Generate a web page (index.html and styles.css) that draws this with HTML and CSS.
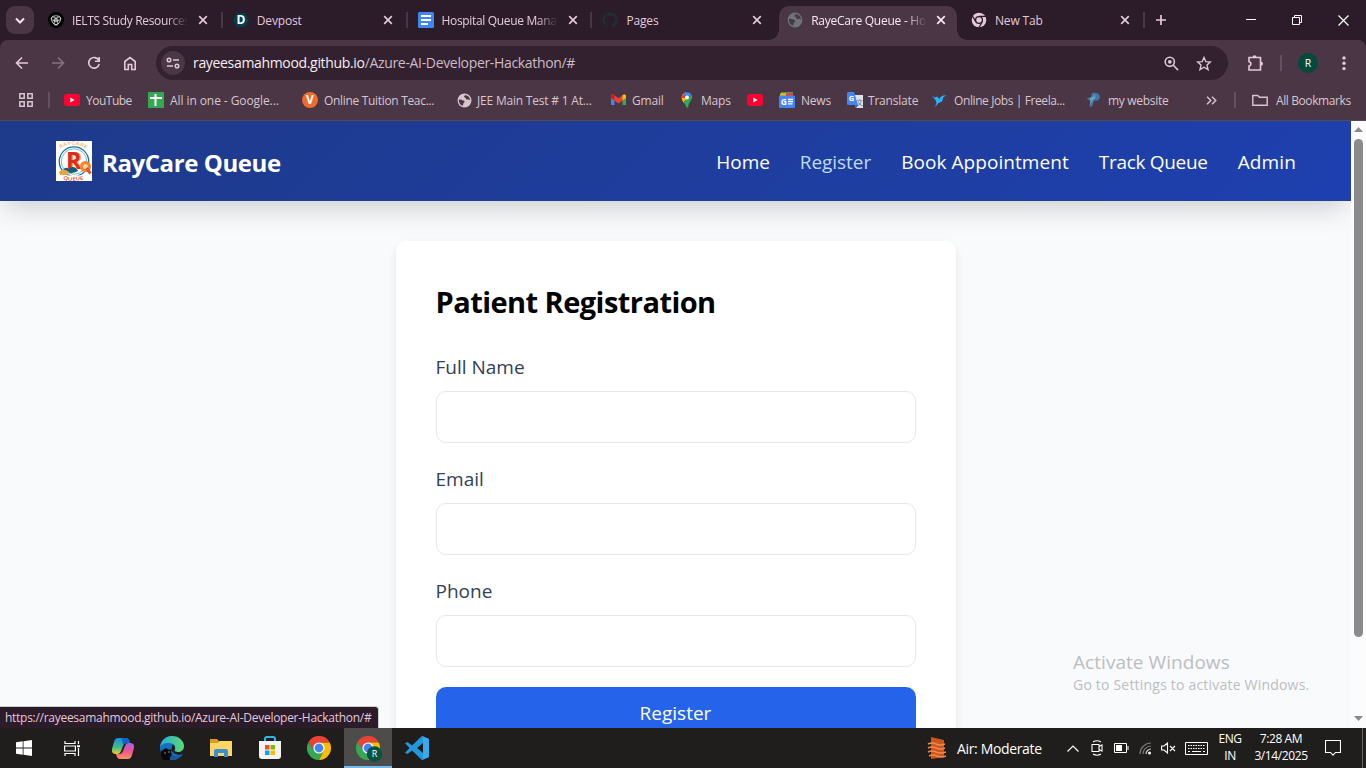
FILE: index.html
```html
<!DOCTYPE html>
<html lang="en">
  <head>
    <meta charset="utf-8">
    <title>RayeCare Queue - Hospital Queue Management</title>
    <link rel="stylesheet" href="styles.css">
  </head>
  <body>
    <svg class="defs" width="0" height="0">
      <defs>
        <symbol id="x" viewBox="0 0 10 10"><path d="M1.2 1.2l7.6 7.6M8.8 1.2L1.2 8.8" stroke="currentColor" stroke-width="1.7" fill="none"/></symbol>
        <symbol id="globe" viewBox="0 0 16 16">
          <circle cx="8" cy="8" r="7.4" fill="currentColor"/>
          <path class="globe-land" d="M2 7c1.600-.4 2.800 0 3.800.6 1.600.1 2.400.6 2.300 1.600-.1 1-1.300 1.200-1.400 2.300 0 .9-.5 2-1.200 2.200C3.200 12.600 1.600 10 2 7zM9 2c-.5.800-1.600 1-1.500 2 .2 1 1.500.5 1.800 1.500.2 1.300 1.200 1.800 2.300 1.400 1-.3 1.800.6 2.500.8-.1-2.900-2.300-5.200-5.100-5.700z"/>
        </symbol>
        <symbol id="youtube" viewBox="0 0 16 12"><rect width="16" height="12" rx="3" fill="#ff0033"/><path d="M6.300 3.500v5l4.200-2.500z" fill="#fff"/></symbol>
        <symbol id="chrome" viewBox="0 0 24 24">
          <path d="M12 6.500h10.700A12 12 0 0 0 1.600 6l5.600 8.700L12 12z" fill="#ea4335"/>
          <path d="M7.200 14.700L1.600 6A12 12 0 0 0 12 24l4.800-9.300L12 12z" fill="#34a853"/>
          <path d="M12 6.500h10.700A12 12 0 0 1 12 24l4.800-9.200z" fill="#fbbc04"/>
          <circle cx="12" cy="12" r="5.600" fill="#fff"/><circle cx="12" cy="12" r="4.400" fill="#4285f4"/>
        </symbol>
      </defs>
    </svg>

    <!-- Tab strip -->
    <div class="tabstrip">
      <button class="tab-search"><svg width="10" height="7" viewBox="0 0 10 7"><path d="M1 1.500l4 4 4-4" stroke="currentColor" stroke-width="2" fill="none"/></svg></button>
      <div class="tabs">
        <div class="tab">
          <svg class="favicon" viewBox="0 0 16 16"><circle cx="8" cy="8" r="8" fill="#000"/><g fill="none" stroke="#ddd" stroke-width=".8"><ellipse cx="8" cy="6.300" rx="4.500" ry="2.500"/><ellipse cx="8" cy="6.300" rx="4.500" ry="2.500" transform="rotate(120 8 8)"/><ellipse cx="8" cy="6.300" rx="4.500" ry="2.500" transform="rotate(240 8 8)"/><path d="M8 6l1.800 1v2L8 10 6.200 9V7z"/></g></svg>
          <span class="tab-title fade">IELTS Study Resources</span>
          <svg class="tab-close"><use href="#x"/></svg>
        </div>
        <div class="tab">
          <svg class="favicon" viewBox="0 0 16 16"><path d="M4 1h8l4 7-4 7H4L0 8z" fill="#003e54"/><text x="8" y="12.300" class="devpost-d">D</text></svg>
          <span class="tab-title">Devpost</span>
          <svg class="tab-close"><use href="#x"/></svg>
        </div>
        <div class="tab">
          <svg class="favicon" viewBox="0 0 16 16"><rect width="16" height="16" rx="1.500" fill="#4285f4"/><path d="M3 4h10M3 8h10M3 12h7" stroke="#fff" stroke-width="1.800"/></svg>
          <span class="tab-title fade">Hospital Queue Mana</span>
          <svg class="tab-close"><use href="#x"/></svg>
        </div>
        <div class="tab no-sep">
          <svg class="favicon" viewBox="0 0 16 16"><path d="M8 0a8 8 0 0 0-2.500 15.600c.4.1.5-.2.5-.4v-1.500c-2.200.5-2.700-.9-2.700-.9-.4-.9-.9-1.200-.9-1.200-.7-.5.1-.5.1-.5.8.1 1.200.8 1.200.8.7 1.300 1.900.9 2.300.7.1-.5.300-.9.500-1.100-1.800-.2-3.600-.9-3.600-4 0-.9.300-1.600.8-2.100-.1-.2-.4-1 .1-2.100 0 0 .7-.2 2.200.8a7.700 7.700 0 0 1 4 0c1.500-1 2.200-.8 2.200-.8.5 1.100.2 1.900.1 2.100.5.5.8 1.200.8 2.100 0 3.100-1.900 3.800-3.700 4 .3.200.6.7.6 1.500v2.200c0 .2.100.5.500.4A8 8 0 0 0 8 0z" fill="#232b33"/></svg>
          <span class="tab-title">Pages</span>
          <svg class="tab-close"><use href="#x"/></svg>
        </div>
        <div class="tab active">
          <svg class="favicon dim"><use href="#globe"/></svg>
          <span class="tab-title fade t-raye">RayeCare Queue - Ho</span>
          <svg class="tab-close"><use href="#x"/></svg>
        </div>
        <div class="tab">
          <svg class="favicon" viewBox="0 0 16 16"><circle cx="8" cy="8" r="7.300" fill="#e3c9dc"/><circle cx="8" cy="8" r="3.400" fill="none" stroke="#2c1b29" stroke-width="1.300"/><path d="M8 4.300h7M4.900 9.800L1.400 4M11.200 9.800L8 15.500" stroke="#2c1b29" stroke-width="1.300"/></svg>
          <span class="tab-title">New Tab</span>
          <svg class="tab-close"><use href="#x"/></svg>
        </div>
      </div>
      <svg class="new-tab" width="12" height="12" viewBox="0 0 12 12"><path d="M6 1v10M1 6h10" stroke="currentColor" stroke-width="1.700"/></svg>
      <div class="window-buttons">
        <svg width="10" height="10"><path d="M0 4.500h10" stroke="#fff"/></svg>
        <svg width="10" height="10"><path d="M.5 2.500h7v7h-7zM2.500 2.500v-2h7v7h-2" stroke="#fff" fill="none"/></svg>
        <svg width="11" height="11"><path d="M.5.5l10 10M10.500.5l-10 10" stroke="#fff" stroke-width="1.200"/></svg>
      </div>
    </div>

    <!-- Toolbar -->
    <div class="toolbar">
      <div class="nav-buttons">
        <svg width="14" height="14" viewBox="0 0 14 14"><path d="M13 7H2M7 1.500L1.500 7 7 12.500"/></svg>
        <svg class="disabled" width="14" height="14" viewBox="0 0 14 14"><path d="M1 7h11M7 1.500L12.500 7 7 12.500"/></svg>
        <svg width="14" height="14" viewBox="0 0 14 14"><path d="M11.800 4.500A5.300 5.300 0 1 0 12.200 8M12.200 1v4.200H8"/></svg>
        <svg width="14" height="15" viewBox="0 0 14 15"><path d="M1.800 13.500V5.500L7 1.500l5.200 4v8H8.700V8.500H5.300v5z"/></svg>
      </div>
      <div class="omnibox">
        <span class="site-info"><svg width="14" height="12" viewBox="0 0 14 12"><g fill="none" stroke="currentColor" stroke-width="1.500"><circle cx="3" cy="3" r="1.800"/><path d="M7 3h6M1 9h6"/><circle cx="11" cy="9" r="1.800"/></g></svg></span>
        <span class="url">rayeesamahmood.github.io<span>/Azure-AI-Developer-Hackathon/#</span></span>
        <svg width="15" height="15" viewBox="0 0 15 15"><g fill="none" stroke="currentColor" stroke-width="1.600"><circle cx="5.800" cy="5.800" r="4.600"/><path d="M9.300 9.300l4.800 4.800"/></g><circle cx="5.800" cy="5.800" r="1.900" fill="currentColor"/></svg>
        <svg width="16" height="15" viewBox="0 0 16 15"><path d="M8 1.500l1.900 4.200 4.500.4-3.400 3 1 4.500L8 11.200l-4 2.400 1-4.500-3.400-3 4.500-.4z" fill="none" stroke="currentColor" stroke-width="1.400"/></svg>
      </div>
      <svg class="puzzle" width="17" height="17" viewBox="0 0 17 17"><path d="M2 2.500h11.500V15H2v-4c2.600-.4 2.600-4 0-4.400z" fill="none" stroke="currentColor" stroke-width="1.600"/><path d="M5.500 2.200a2 2 0 0 1 4 0zM14 6.800a2 2 0 0 1 0 4z" fill="currentColor"/></svg>
      <i class="divider"></i>
      <span class="avatar">R</span>
      <svg class="kebab" width="4" height="16"><circle cx="2" cy="3" r="1.700"/><circle cx="2" cy="8.300" r="1.700"/><circle cx="2" cy="13.600" r="1.700"/></svg>
    </div>

    <!-- Bookmarks -->
    <div class="bookmarks">
      <svg width="14" height="14" viewBox="0 0 14 14"><path d="M.8.8h4.400v4.400H.8zM8.800.8h4.400v4.400H8.800zM.8 8.800h4.400v4.400H.8zM8.800 8.800h4.400v4.400H8.800z" fill="none" stroke="currentColor" stroke-width="1.500"/></svg>
      <i class="divider"></i>
      <a class="b-youtube"><svg width="16" height="12"><use href="#youtube"/></svg><span>YouTube</span></a>
      <a class="b-sheets"><svg width="16" height="16"><rect width="16" height="16" rx="1" fill="#34a853"/><path d="M2 6h12M7.500 2v12" stroke="#fff" stroke-width="2"/></svg><span>All in one - Google...</span></a>
      <a class="b-tuition"><svg width="16" height="16"><circle cx="8" cy="8" r="8" fill="#ee6c2d"/><text x="8" y="12.300" class="icon-letter v">V</text></svg><span>Online Tuition Teac...</span></a>
      <a class="tight"><svg width="15" height="15" viewBox="0 0 16 16"><use href="#globe"/></svg><span>JEE Main Test # 1 At...</span></a>
      <a><svg width="15" height="12" viewBox="0 0 15 12"><path d="M0 1v10h3.500V5z" fill="#4285f4"/><path d="M15 1v10h-3.500V5z" fill="#34a853"/><path d="M0 1.500V4l7.500 5.500L15 4V1.500C14 0 13 0 12 .9L7.500 4.200 3 .9C2 0 .6.2 0 1.500z" fill="#ea4335"/><path d="M11.500 1.200v5.400L15 4V1.500C14 0 12.500.3 11.500 1.200z" fill="#fbbc04"/><path d="M0 1.500V4l3.500 2.600V1.200C2 0 .6.2 0 1.500z" fill="#c5221f"/></svg><span>Gmail</span></a>
      <a><svg width="16" height="16" viewBox="0 0 16 16"><path d="M2.600 5.500A5.500 5.500 0 0 1 7 .5l2 5-4.500 5C3.500 8.700 2.600 7 2.600 5.500z" fill="#fbbc04"/><path d="M3.500 2.500A5.500 5.500 0 0 1 12.500 2.500L8 6z" fill="#4285f4"/><path d="M3.500 2.400L2.600 6 6 6 7 3z" fill="#ea4335"/><path d="M12.500 2.400c2.500 4.500-2.800 6.600-3.500 13.200H7.400C7 13 6 12 4.500 10.200z" fill="#34a853"/><circle cx="8" cy="5.600" r="2" fill="#fff"/></svg><span>Maps</span></a>
      <a><svg width="16" height="12"><use href="#youtube"/></svg></a>
      <a><svg width="16" height="16"><path d="M2 0h12v5H2z" fill="#34a853"/><path d="M1 1.500l11-.5v4H1z" fill="#fbbc04"/><path d="M7 1h7v4H7z" fill="#ea4335"/><rect y="3.500" width="16" height="12.500" rx="1" fill="#4285f4"/><text x="4.800" y="12.800" class="icon-letter">G</text><path d="M9 7.500h5M9 9.700h5M9 11.800h4.500" stroke="#fff" stroke-width="1.300" fill="none"/></svg><span>News</span></a>
      <a class="tight"><svg width="16" height="16" viewBox="0 0 16 16"><path d="M6 3h10v13H9z" fill="#dfe1e5"/><text x="12.500" y="12.500" class="icon-wen">文</text><path d="M1 0h6l4 13H1a1 1 0 0 1-1-1V1z" fill="#4285f4"/><path d="M8 13h3l-1.500 3z" fill="#3367d6"/><text x="4.500" y="9.300" class="icon-letter small">G</text></svg><span>Translate</span></a>
      <a class="b-jobs"><svg width="16" height="14"><path d="M6 3.500L8.500 6 9.500 4 12 2.500h3.500L12.500 4 11 8.500 7.500 10 4 14 5.500 9.500 3.500 5z" fill="#29b2fe"/><path d="M1 3l4.500 2L4 6z" fill="#29b2fe"/></svg><span>Online Jobs | Freela...</span></a>
      <a class="b-site"><svg width="15" height="16"><path d="M.5 6.500L5 5l.500-3.500Q9 0 12 1.500 15 4 13 7.500 11 9.500 8 8.500L6 14.500H3.500L4.500 9z" fill="#3d78a8"/><path d="M3 7l5-3 1-2 .5 4-2.500 2-3 5 .5-5z" fill="#6e9ebe"/></svg><span>my website</span></a>
      <svg width="11" height="9" viewBox="0 0 11 9"><path d="M1 .7l3.800 3.800L1 8.300M6 .7l3.800 3.800L6 8.300" fill="none" stroke="currentColor" stroke-width="1.400"/></svg>
      <i class="divider"></i>
      <a class="b-all"><svg width="16" height="12"><path d="M.8 10.500v-9h5l1.700 1.800h7.700v7.900H.8z" fill="none" stroke="currentColor" stroke-width="1.400"/></svg><span>All Bookmarks</span></a>
    </div>

    <!-- Web page -->
    <div class="viewport">
      <div class="page">
        <nav class="navbar">
          <div class="brand">
            <svg width="36" height="40" viewBox="0 0 36 40">
              <rect width="36" height="40" fill="#fff"/>
              <path id="arc" d="M4 8Q18-1.500 33 10" fill="none"/>
              <path id="arc2" d="M7 38.500Q18 41 30 38" fill="none"/>
              <circle cx="18" cy="20.500" r="14.700" fill="none" stroke="#1d7196" stroke-width="1.300"/>
              <circle cx="18" cy="20.500" r="12.700" fill="none" stroke="#51a5c1" stroke-width=".8"/>
              <path d="M7.500 36Q18 32 29 36v4H7.500z" fill="#fff"/>
              <text class="logo-top"><textPath href="#arc" textLength="28" lengthAdjust="spacingAndGlyphs">RAYCARE</textPath></text>
              <text x="10" y="28" class="logo-r">R</text>
              <path d="M7 30c1-4 4-4 6-2 4-4 8-1 9 2-5 3-10 2-15 0z" fill="#175d82"/>
              <path d="M3 31c3-3 6-3 10 0l-2 3H4z" fill="#eda338"/>
              <circle cx="29.500" cy="25.500" r="4" fill="#f8d0a0" stroke="#f0852b" stroke-width="3"/>
              <path d="M30.500 27l4 5.500" stroke="#e45525" stroke-width="3"/>
              <text class="logo-bottom"><textPath href="#arc2" textLength="21" lengthAdjust="spacingAndGlyphs">QUEUE</textPath></text>
            </svg>
            <span>RayCare Queue</span>
          </div>
          <div class="nav-links">
            <a>Home</a>
            <a class="current">Register</a>
            <a class="l-book">Book Appointment</a>
            <a class="l-track">Track Queue</a>
            <a class="l-admin">Admin</a>
          </div>
        </nav>
        <form class="card">
          <h2>Patient Registration</h2>
          <label>Full Name</label>
          <input type="text">
          <label>Email</label>
          <input type="email">
          <label>Phone</label>
          <input type="tel">
          <button type="button">Register</button>
        </form>
      </div>
      <div class="scrollbar">
        <svg width="9" height="5"><path d="M0 5L4.500 0 9 5z" fill="#8b8b8b"/></svg>
        <i class="thumb"></i>
        <svg width="9" height="5"><path d="M0 0l4.500 5L9 0z" fill="#8b8b8b"/></svg>
      </div>
      <div class="status-bubble">https://rayeesamahmood.github.io/Azure-AI-Developer-Hackathon/#</div>
      <div class="watermark">
        <p class="w-title">Activate Windows</p>
        <p class="w-text">Go to Settings to activate Windows.</p>
      </div>
    </div>

    <!-- Taskbar -->
    <div class="taskbar">
      <div class="apps">
        <span><svg width="16" height="16"><path d="M0 2.300L6.700 1.300v6.200H0zM7.500 1.200L16 0v7.500H7.500zM0 8.400h6.700v6.300L0 13.700zM7.500 8.400H16V16l-8.500-1.200z" fill="#fff"/></svg></span>
        <span class="task-view"><svg width="17" height="15" fill="none" stroke="#fff" stroke-width="1.200"><path d="M1 0v2.500h10V0M1 15v-2.500h10V15M.6 5h10.800v5H.6zM14.500 0v3M14.500 7v8"/><path d="M13 5.200h3" stroke-width="2"/></svg></span>
        <span class="nudge"><svg width="22" height="21" viewBox="0 0 22 21"><defs><linearGradient id="cp1" x2="0" y2="1"><stop stop-color="#178de5"/><stop offset=".6" stop-color="#45be83"/><stop offset="1" stop-color="#f1cf2d"/></linearGradient><linearGradient id="cp2" x2="0" y2="1"><stop stop-color="#a85cec"/><stop offset=".5" stop-color="#ec558e"/><stop offset="1" stop-color="#fb9260"/></linearGradient></defs><path d="M6 0h8q3 0 4 5h-3q-3 0-4 3l-2 5q-1 3-4 3H3q-4-1-3-5l2-7q1-4 4-4z" fill="url(#cp1)"/><path d="M16 5h3q4 1 3 5l-2 7q-1 4-4 4H8q-3 0-4-5h3q3 0 4-3l2-5q1-3 3-3z" fill="url(#cp2)"/><path d="M10 0h4q3 0 4 5h-3q-3 0-4 2z" fill="#1262c7"/></svg></span>
        <span class="nudge"><svg width="24" height="24" viewBox="0 0 24 24"><defs><linearGradient id="ed"><stop stop-color="#27a9df"/><stop offset="1" stop-color="#5bdb73"/></linearGradient></defs><path d="M0 12A12 12 0 0 1 12 0q5 2 0 10-2 8 7 9l4-1Q19 24 12 24A12 12 0 0 1 0 12z" fill="#1471be"/><path d="M0 11C1 4 6 0 12 0c7 0 12 5 12 10 0 4-3 6-6 6-3 0-4-1-3-3 1-3-2-6-6-6-5 0-8 2-9 4z" fill="url(#ed)"/><path d="M10 11c-2 5 2 10 8 9l4-1-3 3-7 2c-4-2-6-9-2-13z" fill="#155aa0"/><path d="M1 15l5-3 3 2 3-1-1 3 1 3-2 2v3H3l-2-5z" fill="#090909"/><path d="M4 17h2M8 16h2" stroke="#888"/></svg></span>
        <span class="nudge"><svg width="22" height="18"><path d="M0 0h7l2 2h12v5H0z" fill="#d99a21"/><path d="M0 4h8l2-2h12v15H0z" fill="#ffd663"/><path d="M4 18v-6q0-2 2-2h10q2 0 2 2v6h-4v-4H8v4z" fill="#3b8fd4"/></svg></span>
        <span class="nudge"><svg width="24" height="24"><path d="M7 6V3q0-2 2-2h6q2 0 2 2v3" fill="none" stroke="#32b4e8" stroke-width="2"/><path d="M1 5h22v15q0 3-3 3H4q-3 0-3-3z" fill="#f3f3f3"/><path d="M7 9h4.500v4.500H7z" fill="#f25022"/><path d="M12.500 9H17v4.500h-4.500z" fill="#7fba00"/><path d="M7 14.500h4.500V19H7z" fill="#00a4ef"/><path d="M12.500 14.500H17V19h-4.500z" fill="#ffb900"/></svg></span>
        <span><svg width="24" height="24"><use href="#chrome"/></svg></span>
        <span class="running"><svg width="26" height="26"><use href="#chrome" width="24" height="24"/><circle cx="18.500" cy="18" r="7.700" fill="#075244"/><text x="18.500" y="21.300" class="task-r">R</text></svg></span>
        <span><svg width="24" height="24" viewBox="0 0 24 24"><path d="M17 0l7 3v18l-7 3L7 14.500 2.500 18 0 16.700 4.500 12 0 7.300 2.500 6 7 9.500zM18 7l-6 5 6 5z" fill="#2197dc" fill-rule="evenodd"/><path d="M17 0l7 3v18l-7 3 1-1.500v-21z" fill="#38a9ed"/></svg></span>
      </div>
      <div class="tray">
        <svg width="20" height="24"><path d="M4 1l13 3v17L4 23z" fill="#ce541a"/><path d="M1 8q4-2 8 0t9 0M1 12q4-2 8 0t9 0M1 16q4-2 8 0t10 0M2 20q4-2 8 0t9 0" stroke="#f08a50" stroke-width="1.400" fill="none"/></svg>
        <span class="weather">Air: Moderate</span>
        <svg width="12" height="7"><path d="M.5 6.500L6 1l5.500 5.500" stroke="#fff" fill="none" stroke-width="1.200"/></svg>
        <svg width="12" height="16"><path d="M1 4.500h7v7H1zM8 6.500l3-1.500v6L8 9.500M2 2Q6-.5 10 2M2 14q4 2.500 8 0" stroke="#fff" fill="none" stroke-width="1.100"/></svg>
        <svg width="15" height="10"><path d="M.5.5h12v9H.5zM14 3v4" stroke="#fff" fill="none"/><path d="M2 2h6v6H2z" fill="#fff"/></svg>
        <svg width="13" height="13" fill="none"><path d="M1 12A11 11 0 0 1 12 1M4 12a8 8 0 0 1 8-8" stroke="#777" stroke-width="1.200"/><path d="M7 12a5 5 0 0 1 5-5" stroke="#ccc" stroke-width="1.200"/><circle cx="10.500" cy="11" r="1.500" fill="#fff"/></svg>
        <svg width="15" height="12"><path d="M.6 4H3l3.500-3v10L3 8H.6zM9 4l5 5M14 4L9 9" stroke="#fff" fill="none" stroke-width="1.100"/></svg>
        <svg width="23" height="13"><path d="M.5.5h22v12H.5z" stroke="#fff" fill="none"/><path d="M3 3.500h17M3 6.500h17" stroke="#fff" stroke-dasharray="1.500 1"/><path d="M3 9.500h2M7 9.500h9M18 9.500h2" stroke="#fff"/></svg>
        <span class="two-line">ENG<br>IN</span>
        <span class="two-line">7:28 AM<br>3/14/2025</span>
        <svg width="16" height="16"><path d="M.5.500h15v12h-5L8 15.200 5.500 12.500h-5z" stroke="#fff" fill="none" stroke-width="1.100"/></svg>
        <i class="peek"></i>
      </div>
    </div>
  </body>
</html>
```
FILE: styles.css
```css
* {
  box-sizing: border-box;
}

body {
  margin: 0;
  width: 1366px;
  height: 768px;
  overflow: hidden;
  display: flex;
  flex-direction: column;
  background: #2c1b29;
  font-family: "Open Sans", "Noto Sans", sans-serif;
  font-size: 12px;
}

svg {
  display: block;
  flex: none;
}

.defs {
  position: absolute;
}

.divider {
  width: 2px;
  height: 16px;
  background: #67505f;
}

/* Tab strip */
.tabstrip {
  height: 40px;
  flex: none;
  display: flex;
  align-items: center;
  padding-left: 6px;
  color: #e3c9dc;
}

.tab-search {
  width: 28px;
  height: 28px;
  border: 0;
  padding: 0;
  border-radius: 9px;
  background: #4b3645;
  color: #f4e3ee;
  display: grid;
  place-items: center;
}

.tabs {
  display: flex;
  margin-left: 6px;
}

.tab {
  width: 184.8px;
  height: 40px;
  padding: 0 1px 0 8px;
  display: flex;
  align-items: center;
  position: relative;
}

.tab:last-child {
  width: 183px;
  padding-left: 7px;
}

.tab:last-child .tab-close {
  margin-left: 9px;
}

.tab::after {
  content: "";
  width: 2px;
  height: 16px;
  margin-left: auto;
  margin-right: 1px;
  background: #4b3645;
}

.tab.no-sep::after {
  visibility: hidden;
}

.favicon {
  width: 16px;
  height: 16px;
}

.tab-title {
  width: 116px;
  margin: 1px 0 0 8px;
  white-space: nowrap;
  letter-spacing: -0.15px;
}

.fade {
  letter-spacing: -0.34px;
  -webkit-mask-image: linear-gradient(90deg, #000 82%, transparent);
  mask-image: linear-gradient(90deg, #000 82%, transparent);
}

.t-raye {
  letter-spacing: -0.25px;
}

.tab-close {
  width: 10px;
  height: 10px;
  margin-left: 10px;
}

.active {
  color: #f7e8f2;
}

.active > * {
  z-index: 1;
}

.active .tab-close {
  margin-left: 9px;
}

/* active tab body, behind its contents */
.active::before {
  content: "";
  position: absolute;
  left: 0;
  top: 6px;
  width: 178px;
  height: 34px;
  border-radius: 10px 10px 0 0;
  background: #4b3645;
}

/* the flared feet */
.active::after {
  position: absolute;
  left: -10px;
  bottom: 0;
  width: 198px;
  height: 10px;
  background:
    radial-gradient(circle at 0 0, transparent 9.5px, #4b3645 10px) left / 10px 10px no-repeat,
    radial-gradient(circle at 100% 0, transparent 9.5px, #4b3645 10px) right / 10px 10px no-repeat;
}

.favicon.dim {
  color: #6c747a;
}

.globe-land {
  fill: #4b3645;
}

.new-tab {
  margin-left: 8px;
}

.window-buttons {
  margin-left: auto;
  display: grid;
  grid-template-columns: 46px 46px 46px;
  justify-items: center;
  align-items: center;
}

.devpost-d {
  font: bold 12px "Open Sans", sans-serif;
  fill: #fff;
  text-anchor: middle;
}

/* Toolbar */
.toolbar {
  height: 40px;
  flex: none;
  display: flex;
  align-items: center;
  padding: 6px 20px 0 0;
  background: #4b3645;
  border-radius: 8px 8px 0 0;
  color: #e3c9dc;
}

.nav-buttons {
  width: 156px;
  display: flex;
  gap: 22px;
  padding-left: 15px;
}

.nav-buttons path {
  fill: none;
  stroke: currentColor;
  stroke-width: 1.6;
}

.disabled {
  color: #87717f;
}

.omnibox {
  width: 1072px;
  height: 34px;
  border-radius: 17px;
  background: #33212f;
  display: flex;
  align-items: center;
  padding-left: 5px;
  color: #dcc8d5;
}

.omnibox > svg {
  margin-right: 17px;
}

.omnibox > svg:last-child {
  margin-right: 16px;
}

.site-info {
  width: 24px;
  height: 24px;
  border-radius: 50%;
  background: #4b3645;
  display: grid;
  place-items: center;
}

.url {
  flex: 1;
  margin: -1px 0 0 8px;
  font-size: 14px;
  letter-spacing: -0.33px;
  color: #f7eef4;
}

.url span {
  color: #cdbbc7;
}

.puzzle {
  margin-left: 19px;
}

.toolbar .divider {
  margin: 0 16px;
}

.avatar {
  width: 20px;
  height: 20px;
  border-radius: 50%;
  background: #04493d;
  color: #fff;
  font-size: 10.5px;
  line-height: 20px;
  text-align: center;
}

.kebab {
  margin-left: auto;
  fill: currentColor;
}

/* Bookmarks: one column per entry */
.bookmarks {
  height: 41px;
  flex: none;
  display: grid;
  grid-template-columns: 29px 16px 84px 154px 155px 154px 68px 68px 32px 68px 84px 155px 120px 28px 18px 1fr;
  align-items: center;
  padding-left: 19px;
  background: #4b3645;
  border-bottom: 1px solid #57484f;
  color: #d6c6d0;
  letter-spacing: -0.2px;
}

.bookmarks a {
  display: flex;
  align-items: center;
  gap: 6px;
  white-space: nowrap;
}

.bookmarks .tight {
  gap: 5px;
}

.bookmarks .b-youtube {
  letter-spacing: -0.5px;
}

.bookmarks .b-sheets {
  letter-spacing: -0.08px;
}

.bookmarks .b-tuition {
  letter-spacing: -0.32px;
}

.bookmarks .b-jobs {
  gap: 7px;
  letter-spacing: -0.4px;
}

.bookmarks .b-all {
  gap: 8px;
  letter-spacing: -0.4px;
}

.bookmarks .b-site {
  gap: 7px;
  letter-spacing: -0.3px;
}

.icon-letter {
  font: bold 8.5px "Open Sans", sans-serif;
  letter-spacing: 0;
  fill: #fff;
  text-anchor: middle;
}

.icon-letter.v {
  font-size: 12px;
}

.icon-letter.small {
  font-size: 7.5px;
}

.icon-wen {
  font: 7px "Noto Sans CJK SC", sans-serif;
  letter-spacing: 0;
  fill: #63779a;
  text-anchor: middle;
}

/* Web page */
.viewport {
  height: 607px;
  flex: none;
  display: flex;
  position: relative;
  overflow: hidden;
}

.page {
  width: 1351px;
  background: #f8fafc;
}

.navbar {
  height: 80px;
  display: flex;
  align-items: center;
  justify-content: space-between;
  padding: 0 55px 0 56px;
  background: linear-gradient(135deg, #1e3a8a, #1e40af);
  box-shadow: 0 10px 30px -5px rgba(0, 0, 0, 0.2);
  color: #fff;
}

.brand {
  display: flex;
  align-items: center;
  gap: 10px;
  font-size: 24px;
  font-weight: 700;
  letter-spacing: -0.42px;
}

.brand span {
  padding-top: 2px;
}

.nav-links {
  display: flex;
  gap: 30px;
  padding-top: 1px;
  font-size: 19px;
  letter-spacing: -0.05px;
}

.l-book {
  letter-spacing: 0.06px;
}

.l-track {
  letter-spacing: -0.3px;
}

.l-admin {
  letter-spacing: 0.12px;
}

.current {
  color: #bfdbfe;
}

.logo-top,
.logo-bottom {
  font: 600 5px "Open Sans", sans-serif;
  letter-spacing: 0;
  fill: #f2ba72;
}

.logo-bottom {
  fill: #df3f38;
}

/* red monogram with an orange edge on its right */
.logo-r {
  font: 700 23px "Open Sans", sans-serif;
  fill: #da2c24;
  text-shadow: 1.5px 0 0 #f6a32e;
}

.card {
  width: 560px;
  height: 540px;
  margin: 40px auto 0;
  padding: 40px;
  background: #fff;
  border-radius: 10px;
  box-shadow: 0 4px 8px rgba(0, 0, 0, 0.09);
}

.card h2 {
  margin: -1px 0 29px;
  font-size: 29px;
  line-height: 44px;
  letter-spacing: -0.55px;
  color: #000;
}

.card label {
  display: block;
  height: 28px;
  margin-bottom: 10px;
  font-size: 19px;
  line-height: 28px;
  color: #334155;
}

.card input {
  display: block;
  width: 480px;
  height: 52px;
  margin-bottom: 22px;
  border: 1px solid #e5e7eb;
  border-radius: 10px;
  background: #fff;
}

.card button {
  display: block;
  width: 480px;
  height: 52px;
  margin-top: -2px;
  border: 0;
  border-radius: 10px;
  background: #2563eb;
  color: #fff;
  font: 19px "Open Sans", sans-serif;
}

.scrollbar {
  width: 15px;
  background: #fcfcfc;
  display: flex;
  flex-direction: column;
  align-items: center;
  padding: 6px 0 7px;
}

.scrollbar .thumb {
  width: 9px;
  height: 498px;
  margin: 7px 0 auto;
  border-radius: 5px;
  background: #8b8b8b;
}

.status-bubble {
  position: absolute;
  left: 0;
  bottom: 0;
  width: 379px;
  height: 22px;
  padding-left: 5px;
  border: 1px solid #cfcdd0;
  border-width: 1px 1px 0 0;
  border-radius: 0 4px 0 0;
  background: #2c1b29;
  color: #e3c9dc;
  line-height: 21px;
  letter-spacing: -0.28px;
  white-space: nowrap;
}

.watermark {
  position: absolute;
  left: 1073px;
  top: 528px;
  color: #bcbec0;
  white-space: nowrap;
}

.watermark p {
  margin: 0;
}

.w-title {
  font-size: 19px;
  line-height: 27px;
  letter-spacing: 0.05px;
}

.w-text {
  font-size: 14px;
  line-height: 18px;
  letter-spacing: 0.2px;
}

/* Taskbar */
.taskbar {
  height: 40px;
  flex: none;
  display: flex;
  justify-content: space-between;
  background: #1f1e1d;
  color: #fff;
}

.apps {
  display: flex;
  gap: 1.1px;
}

.apps span {
  width: 48px;
  display: grid;
  place-items: center;
}

.apps .task-view {
  padding-right: 2px;
}

.apps .nudge {
  padding-left: 2px;
}

.apps .running {
  background: #4c4c4b;
  border-bottom: 2px solid #76b9ed;
}

.running svg {
  margin: 3px 0 0 2px;
}

.task-r {
  font: 9px "Open Sans", sans-serif;
  fill: #fff;
  text-anchor: middle;
}

.tray {
  display: grid;
  grid-template-columns: 30px 104px 24px 24px 24px 25px 20px 36px 32px 70px 34px 16px;
  align-items: center;
  justify-items: center;
}

.tray > svg:first-child,
.weather {
  justify-self: start;
}

.weather {
  font-size: 14px;
  letter-spacing: -0.35px;
  white-space: nowrap;
}

.two-line {
  margin-top: -2px;
  line-height: 17px;
  letter-spacing: -0.4px;
  text-align: center;
  white-space: nowrap;
}

.peek {
  width: 1px;
  height: 40px;
  background: #6b6b6a;
  justify-self: end;
  margin-right: 3px;
}
```
